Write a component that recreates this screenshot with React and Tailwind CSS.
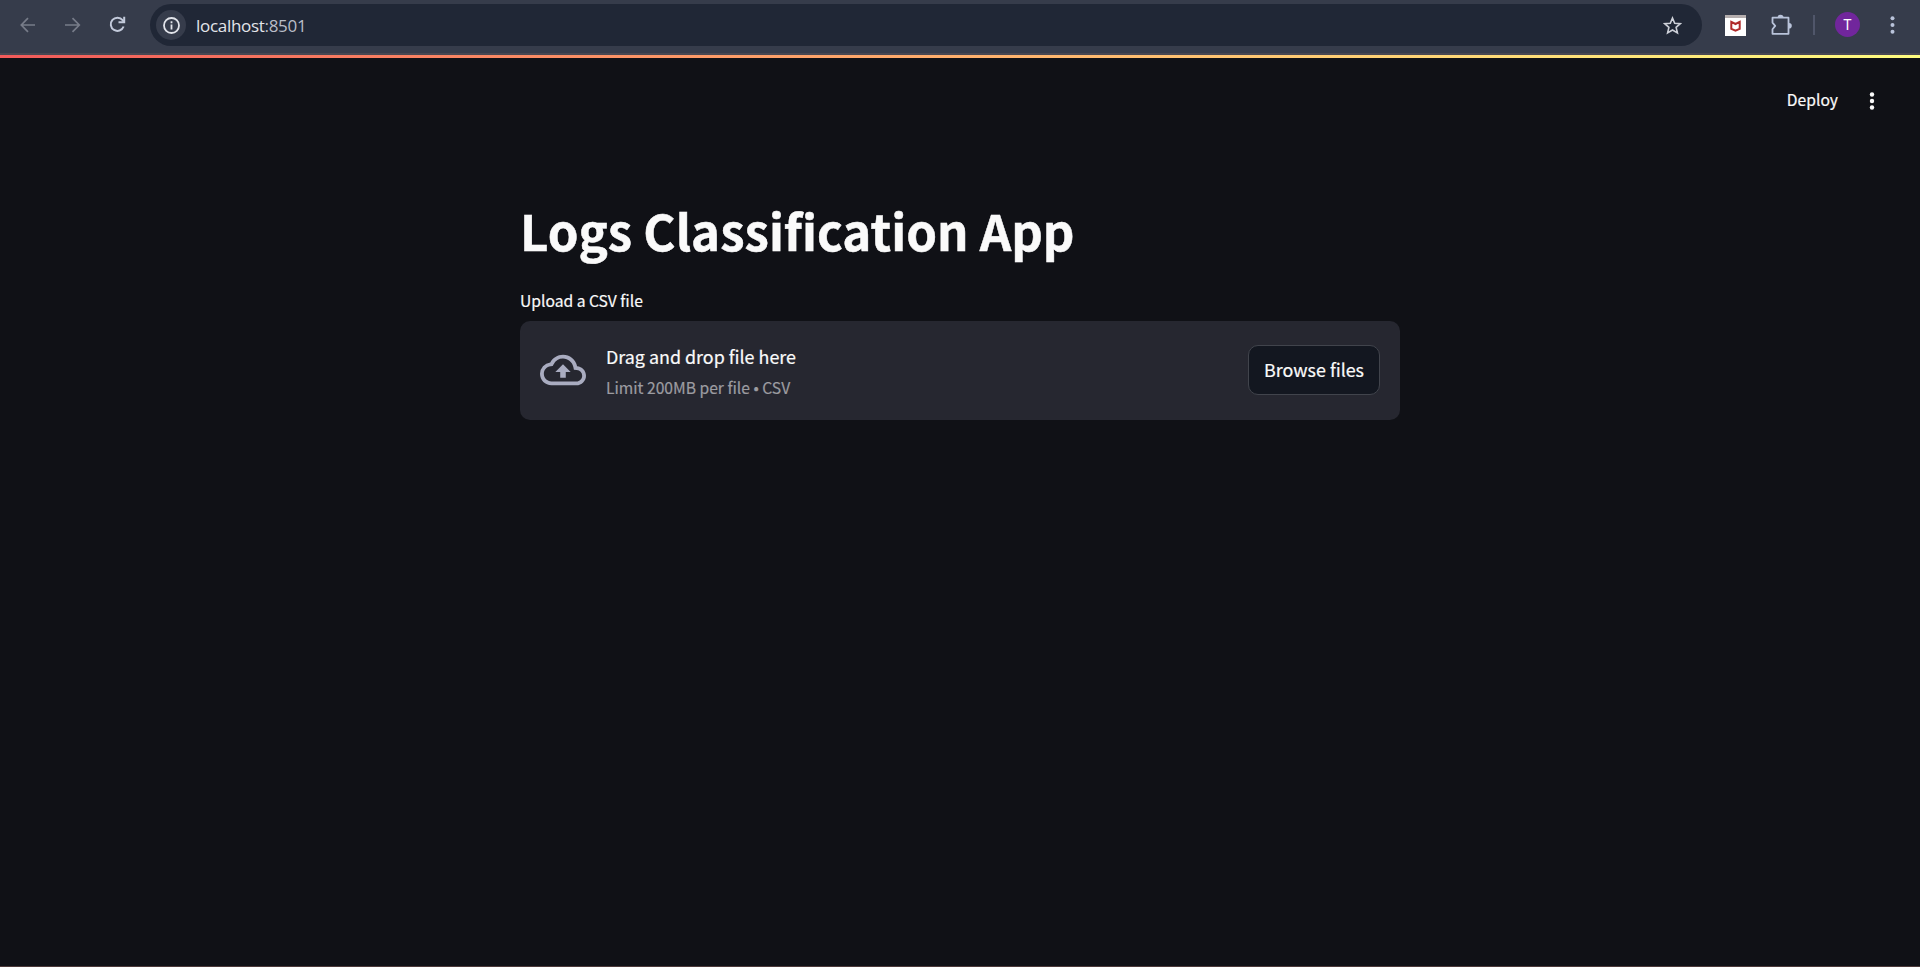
import React from "react";

const source = "font-['Noto_Sans_CJK_JP','Noto_Sans',sans-serif]";

function BrowserBar() {
  return (
    <header className="flex h-[53px] shrink-0 items-start bg-[#363c4b]">
      <div className="flex h-[49px] w-[150px] shrink-0 items-center pl-[20px]">
        <svg width="16" height="16" viewBox="0 0 16 16" fill="none" stroke="#777c89" strokeWidth="1.7">
          <path d="M15 8H1.5M8 1.2L1.3 8L8 14.8" />
        </svg>
        <svg className="ml-[29px]" width="16" height="16" viewBox="0 0 16 16" fill="none" stroke="#777c89" strokeWidth="1.7">
          <path d="M0 8h14M7.500 1.200L14.300 8L7.500 14.800" />
        </svg>
        <svg className="ml-[28px]" width="17" height="17" viewBox="0 0 17 17" fill="none" stroke="#c3cadb" strokeWidth="2">
          <path d="M14.600 10.500A6.600 6.600 0 1 1 13.600 4.200L15 6" />
          <path d="M15.200 .8V6.200H9.500" />
        </svg>
      </div>
      <div className="mt-1 flex h-[42px] flex-1 items-center rounded-full bg-[#202736] pl-[6px] pr-5">
        <span className="flex size-[30px] items-center justify-center rounded-full bg-[#363c4b]">
          <svg width="17" height="17" viewBox="0 0 17 17" fill="none" stroke="#e2e4ea" strokeWidth="1.8">
            <circle cx="8.500" cy="8.500" r="7.500" />
            <path d="M8.500 7.500V12.500M8.500 4.300V6.200" />
          </svg>
        </span>
        <span className="ml-[10px] pt-px font-['Open_Sans',sans-serif] text-[17px] leading-[24px] tracking-[-0.3px] text-[#e3e5ea]">
          localhost<span className="text-[#b9bdc7]">:8501</span>
        </span>
        <svg className="ml-auto" width="19" height="19" viewBox="0 0 19 19" fill="none" stroke="#cdd0d8" strokeWidth="1.6">
          <path d="M9.500 2L11.700 7.200L17.300 7.700L13.100 11.400L14.400 16.900L9.500 14L4.600 16.900L5.900 11.400L1.700 7.700L7.300 7.200Z" />
        </svg>
      </div>
      <div className="flex h-[49px] w-[218px] shrink-0 items-center pl-[23px]">
        <svg className="mt-px" width="21" height="21" viewBox="0 0 21 21">
          <path fill="#fff" d="M0 0h21v21H0z" />
          <path fill="#b5aeae" d="M0 0h21v3H0z" />
          <path fill="none" stroke="#b02a2a" strokeWidth="2" d="M6.300 6.800V13.800L10.500 15.700L14.700 13.800V6.800L10.500 9Z" />
        </svg>
        <svg className="ml-[24px]" width="22" height="22" viewBox="0 0 22 22">
          <path fill="none" stroke="#b9c3da" strokeWidth="1.8" strokeLinejoin="round" d="M2.500 3.700H18.500V19.800H2.500V15.200L5.200 11.900L2.500 8.700Z" />
          <path fill="#b9c3da" d="M7.500 3.500a3 2.700 0 0 1 6 0ZM19 9a2.800 2.800 0 0 1 0 5.600Z" />
        </svg>
        <span className="ml-[21px] h-5 w-[2px] bg-[#50566a]" />
        <span className="ml-[20px] flex size-[25px] items-center justify-center rounded-full bg-[#71269c] font-[Roboto,sans-serif] text-[14px] leading-none text-white">
          T
        </span>
        <svg className="ml-[30px]" width="5" height="18" viewBox="0 0 5 18" fill="#b9c3da">
          <circle cx="2.500" cy="2.200" r="2" />
          <circle cx="2.500" cy="9" r="2" />
          <circle cx="2.500" cy="15.800" r="2" />
        </svg>
      </div>
    </header>
  );
}

function Uploader() {
  return (
    <section className="mt-[8px] flex h-[99px] items-center rounded-[10px] bg-[#262730] px-5 pb-[2px]">
      <svg width="46" height="46" viewBox="0 0 24 24" fill="#a9acc0">
        <path d="M19.350 10.040A7.490 7.490 0 0 0 12 4C9.110 4 6.600 5.640 5.350 8.040A5.994 5.994 0 0 0 0 14c0 3.310 2.690 6 6 6h13c2.760 0 5-2.240 5-5 0-2.640-2.050-4.780-4.650-4.960zM19 18H6c-2.210 0-4-1.790-4-4 0-2.050 1.530-3.760 3.560-3.970l1.070-.11.5-.95A5.469 5.469 0 0 1 12 6c2.620 0 4.880 1.860 5.390 4.430l.3 1.500 1.530.11A2.980 2.980 0 0 1 22 15c0 1.650-1.350 3-3 3zM8 13h2.550v3h2.900v-3H16l-4-4z" />
      </svg>
      <div className="ml-5 flex flex-col pt-[2px]">
        <span className="text-[17.900px] leading-[32px] text-[#fafafa] [-webkit-text-stroke:0.2px_#fafafa]">
          Drag and drop file here
        </span>
        <span className="pt-[2px] text-[15.650px] leading-[28px] text-[#9c9ca1] [-webkit-text-stroke:0.2px_#9c9ca1]">
          Limit 200MB per file • CSV
        </span>
      </div>
      <button className="ml-auto flex h-[50px] w-[132px] items-center justify-center rounded-[10px] border border-[#41444c] bg-[#131720] text-[17.900px] text-[#fafafa] [-webkit-text-stroke:0.2px_#fafafa]">
        Browse files
      </button>
    </section>
  );
}

export default function App() {
  return (
    <div className={`flex h-[967px] w-[1920px] flex-col overflow-hidden border-b border-[#4d3a3a] bg-[#101116] ${source}`}>
      <BrowserBar />
      <div className="h-[2px] shrink-0 bg-[#484752]" />
      <div className="h-[3px] shrink-0 bg-linear-to-r from-[#f25a5a] to-[#fffd80]" />
      <div className="flex h-[85px] shrink-0 items-center justify-end pr-[45px]">
        <span className="pb-px text-[15.650px] leading-[24px] text-[#fafafa] [-webkit-text-stroke:0.2px_#fafafa]">
          Deploy
        </span>
        <svg className="ml-[31px]" width="6" height="18" viewBox="0 0 6 18" fill="#fafafa">
          <circle cx="3" cy="2.500" r="2.200" />
          <circle cx="3" cy="9" r="2.200" />
          <circle cx="3" cy="15.500" r="2.200" />
        </svg>
      </div>
      <main className="mx-auto flex w-[880px] flex-col pt-[54px]">
        <h1 className="h-[66px] text-[49.200px] font-bold leading-[66px] text-[#fafafa] [-webkit-text-stroke:0.5px_#fafafa]">
          Logs Classification App
        </h1>
        <p className="mt-[26px] h-[24px] text-[15.650px] leading-[24px] text-[#fafafa] [-webkit-text-stroke:0.2px_#fafafa]">
          Upload a CSV file
        </p>
        <Uploader />
      </main>
    </div>
  );
}
